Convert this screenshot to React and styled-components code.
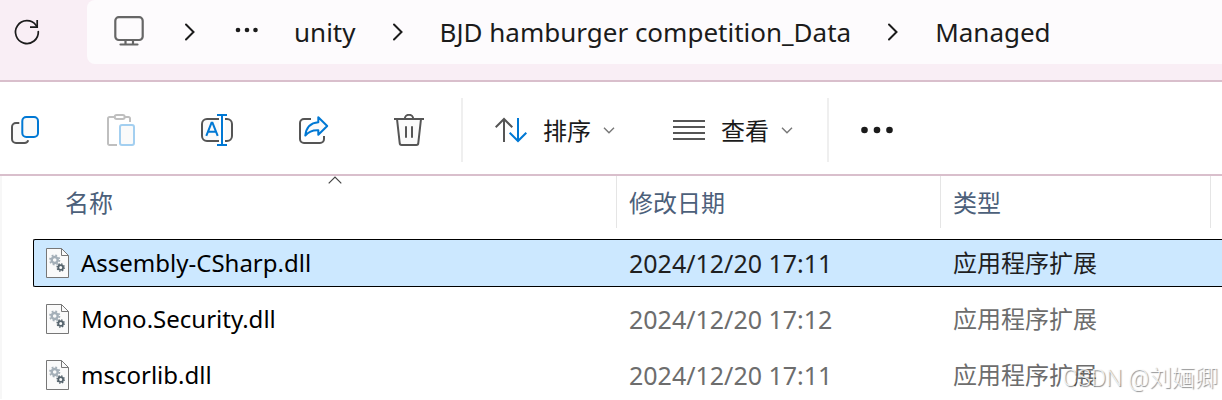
import styled, { createGlobalStyle } from "styled-components";

const files = [
  {
    name: "Assembly-CSharp.dll",
    modified: "2024/12/20 17:11",
    type: "应用程序扩展",
    selected: true,
  },
  {
    name: "Mono.Security.dll",
    modified: "2024/12/20 17:12",
    type: "应用程序扩展",
  },
  {
    name: "mscorlib.dll",
    modified: "2024/12/20 17:11",
    type: "应用程序扩展",
  },
];

const crumbs = ["unity", "BJD hamburger competition_Data", "Managed"];

function App() {
  return (
    <Container>
      <GlobalStyle />
      <AddressBar>
        <RefreshButton aria-label="刷新">
          <RefreshIcon />
        </RefreshButton>
        <Breadcrumbs aria-label="路径">
          <CrumbButton aria-label="此电脑">
            <MonitorIcon />
          </CrumbButton>
          <ChevronRight />
          <CrumbButton aria-label="更多路径">
            <Svg width="26" height="12" viewBox="0 0 26 12">
              <g fill="#1b1b1b">
                <circle cx="6" cy="4" r="2.3" />
                <circle cx="15" cy="4" r="2.3" />
                <circle cx="23.5" cy="4" r="2.3" />
              </g>
            </Svg>
          </CrumbButton>
          {crumbs.map((crumb, index) => (
            <Crumb key={crumb}>
              {index > 0 && <ChevronRight />}
              <CrumbButton>{crumb}</CrumbButton>
            </Crumb>
          ))}
        </Breadcrumbs>
      </AddressBar>

      <Toolbar>
        <IconGroup>
          <ToolButton aria-label="复制">
            <CopyIcon />
          </ToolButton>
          <ToolButton aria-label="粘贴" disabled>
            <PasteIcon />
          </ToolButton>
          <ToolButton aria-label="重命名">
            <RenameIcon />
          </ToolButton>
          <ToolButton aria-label="共享">
            <ShareIcon />
          </ToolButton>
          <ToolButton aria-label="删除">
            <TrashIcon />
          </ToolButton>
        </IconGroup>
        <MenuGroup>
          <ToolButton>
            <SortIcon />
            排序
            <ChevronDown />
          </ToolButton>
          <ToolButton>
            <ViewIcon />
            查看
            <ChevronDown />
          </ToolButton>
        </MenuGroup>
        <ToolButton aria-label="更多">
          <Svg width="32" height="32" viewBox="0 0 32 32">
            <g fill="#1b1b1b">
              <circle cx="3.5" cy="16" r="3.3" />
              <circle cx="16" cy="16" r="3.3" />
              <circle cx="28.5" cy="16" r="3.3" />
            </g>
          </Svg>
        </ToolButton>
      </Toolbar>

      <FilePane>
        <FileTable>
          <thead>
            <HeadRow>
              <HeadCell $first>
                名称
                <SortMark width="14" height="8" viewBox="0 0 14 8">
                  <path d="M.7 7.3 7 1l6.3 6.3" stroke="#444" strokeWidth="1.2" />
                </SortMark>
              </HeadCell>
              <HeadCell>修改日期</HeadCell>
              <HeadCell>类型</HeadCell>
              <HeadCell aria-label="大小" />
            </HeadRow>
          </thead>
          <FileRows>
            {files.map((file) => (
              <FileRow key={file.name} $selected={file.selected}>
                <NameCell>
                  <DllIcon />
                  {file.name}
                </NameCell>
                <DateCell $selected={file.selected}>{file.modified}</DateCell>
                <Cell $selected={file.selected}>{file.type}</Cell>
              </FileRow>
            ))}
          </FileRows>
        </FileTable>
      </FilePane>
      <Watermark>CSDN @刘婳卿</Watermark>
    </Container>
  );
}

export default App;

const GlobalStyle = createGlobalStyle`
  * {
    box-sizing: border-box;
  }

  body {
    margin: 0;
    background-color: #fff;
    font-family: "Noto Sans", "Noto Sans CJK SC", sans-serif;
  }

  button {
    padding: 0;
    border: none;
    background: none;
    font: inherit;
    color: inherit;
    cursor: pointer;
  }
`;

const Container = styled.div`
  position: relative;
  overflow: hidden;
`;

const AddressBar = styled.header`
  display: flex;
  align-items: flex-start;
  background-color: #f9eef5;
  border-bottom: 2px solid #d9bfcc;
  padding-bottom: 16px;
`;

const RefreshButton = styled.button`
  display: flex;
  align-items: center;
  justify-content: center;
  width: 54px;
  height: 64px;
  margin-right: 33px;
`;

const Breadcrumbs = styled.nav`
  display: flex;
  flex: 1;
  align-items: center;
  gap: 36px;
  height: 64px;
  padding-left: 25px;
  border-radius: 8px 0 0 8px;
  background-color: #fdfbfd;
  color: #1b1b1b;
  font-size: 26px;
  white-space: nowrap;
`;

const Crumb = styled.div`
  display: flex;
  align-items: center;
  gap: 36px;
`;

const CrumbButton = styled.button`
  display: flex;
  align-items: center;
`;

const Toolbar = styled.div`
  display: flex;
  align-items: center;
  padding: 16px 9px 12px;
  border-bottom: 2px solid #d9bfcc;
`;

const IconGroup = styled.div`
  display: flex;
  align-items: center;
  gap: 64px;
  height: 64px;
  padding-right: 36px;
`;

const MenuGroup = styled.div`
  display: flex;
  align-items: center;
  gap: 58px;
  height: 64px;
  padding: 0 34px 0 32px;
  margin-right: 32px;
  border-left: 2px solid #efefef;
  border-right: 2px solid #efefef;
`;

const ToolButton = styled.button`
  display: flex;
  align-items: center;
  gap: 16px;
  color: #1b1b1b;
  font-family: "Noto Sans CJK SC", sans-serif;
  font-size: 24px;
  line-height: 32px;

  &:disabled {
    cursor: default;
  }

  > svg:last-child:not(:first-child) {
    margin-left: -4px;
  }
`;

const FilePane = styled.main`
  border-left: 2px solid #f7f7f7;
  padding-left: 31px;
`;

const FileTable = styled.table`
  display: block;
  border-spacing: 0;
  font-size: 24px;
  line-height: 32px;
`;

const HeadRow = styled.tr`
  display: grid;
  grid-template-columns: 583px 324px 270px 1fr;
  height: 52px;
`;

const HeadCell = styled.th`
  position: relative;
  margin-left: ${(props) => (props.$first ? "20px" : "0")};
  padding: 10px 12px;
  border-left: ${(props) => (props.$first ? "none" : "1px solid #e5e5e5")};
  color: #4c607a;
  font-family: "Noto Sans CJK SC", sans-serif;
  font-weight: 400;
  text-align: left;
`;

const FileRows = styled.tbody`
  display: grid;
  gap: 8px;
  padding-top: 11px;
`;

const FileRow = styled.tr`
  display: grid;
  grid-template-columns: 582px 324px 1fr;
  align-items: center;
  height: 48px;
  border: 1px solid ${(props) => (props.$selected ? "#000" : "transparent")};
  border-right: none;
  border-radius: 2px 0 0 2px;
  background-color: ${(props) => (props.$selected ? "#cce8ff" : "transparent")};
`;

const NameCell = styled.td`
  display: flex;
  align-items: center;
  gap: 11px;
  padding: 0 12px;
  color: #000;
`;

const Cell = styled.td`
  padding: 0 13px;
  color: ${(props) => (props.$selected ? "#1f1f1f" : "#6d6d6d")};
`;

const DateCell = styled(Cell)`
  font-size: 25px;
`;

const Watermark = styled.div`
  position: absolute;
  right: 4px;
  bottom: 4px;
  color: rgba(255, 255, 255, 0.8);
  font-family: Roboto, "Noto Sans CJK SC", sans-serif;
  font-size: 23px;
  font-weight: 300;
  line-height: 32px;
  text-shadow: 1px 1px 1px rgba(0, 0, 0, 0.45);
  pointer-events: none;
`;

const Svg = styled.svg.attrs({ fill: "none", "aria-hidden": true })`
  display: block;
  flex-shrink: 0;
`;

const SortMark = styled(Svg)`
  position: absolute;
  top: 0;
  left: 50%;
  transform: translateX(-50%);
`;

const gray = "#555";
const blue = "#0078d4";

function RefreshIcon() {
  return (
    <Svg width="28" height="28" viewBox="0 0 28 28" stroke="#1b1b1b" strokeWidth="1.7">
      <path d="M25.3 13.5A11.4 11.4 0 1 1 23 7.2L24.2 9" strokeLinecap="round" />
      <path d="M24.2 2v7.2H17" />
    </Svg>
  );
}

function MonitorIcon() {
  return (
    <Svg width="36" height="32" viewBox="0 0 36 32" stroke="#666" strokeWidth="2.2">
      <rect x="3.3" y="1.2" width="27.4" height="22.8" rx="3.5" />
      <path d="M13.5 24v4.5M21 24v4.5M8.5 28.5h17" strokeLinecap="round" />
    </Svg>
  );
}

function ChevronRight() {
  return (
    <Svg width="12" height="18" viewBox="0 0 12 18" stroke="#1b1b1b" strokeWidth="2">
      <path d="M2 1.5 9.5 9 2 16.5" strokeLinecap="round" />
    </Svg>
  );
}

function ChevronDown() {
  return (
    <Svg width="12" height="12" viewBox="0 0 12 12" stroke="#777" strokeWidth="1.4">
      <path d="m1 3.7 5 5 5-5" />
    </Svg>
  );
}

function CopyIcon() {
  return (
    <Svg width="32" height="32" viewBox="0 0 32 32" strokeWidth="2">
      <path
        d="M10.3 9H7a4 4 0 0 0-4 4v12a4 4 0 0 0 4 4h8.5c2 0 3.3-1.2 3.7-2.7"
        stroke={gray}
        fill="#fafafa"
      />
      <rect x="13.3" y="3" width="15.7" height="20" rx="4" stroke={blue} fill="#fafafa" />
    </Svg>
  );
}

function PasteIcon() {
  return (
    <Svg width="32" height="32" viewBox="0 0 32 32" strokeWidth="2">
      <path
        d="M9.5 3h-5A1.5 1.5 0 0 0 3 4.500v25A1.5 1.5 0 0 0 4.500 31H12M19.500 3h4A1.500 1.500 0 0 1 25 4.500V8"
        stroke="#bfbfbf"
      />
      <rect x="9.7" y="1" width="10" height="4" rx="2" stroke="#bfbfbf" />
      <rect x="15" y="11" width="14" height="20" rx="2" stroke="#a3cff0" fill="#fafafa" />
    </Svg>
  );
}

function RenameIcon() {
  return (
    <Svg width="32" height="32" viewBox="0 0 32 32" strokeWidth="2">
      <path d="M18 5H6a5 5 0 0 0-5 5v12a5 5 0 0 0 5 5h12" stroke={gray} fill="#fafafa" />
      <path d="M24 5h2a5 5 0 0 1 5 5v12a5 5 0 0 1-5 5h-2" stroke={gray} fill="#fafafa" />
      <path d="M21 1v30M16 1h10M16 31h10" stroke={blue} />
      <path d="m5.3 21.8 5.2-13h1l5.2 13M7 17.7h8" stroke={blue} />
    </Svg>
  );
}

function ShareIcon() {
  return (
    <Svg width="32" height="32" viewBox="0 0 32 32" strokeWidth="2">
      <path
        d="M14 5H7a4 4 0 0 0-4 4v16a4 4 0 0 0 4 4h16a4 4 0 0 0 4-4v-3"
        stroke={gray}
      />
      <path
        d="M21.3 3.3 30.2 12l-8.9 8.8v-4.6c-5.5-.3-9.6 1.3-13 5.3.8-7.5 5.3-12.7 13-13.3z"
        stroke={blue}
        fill="#fafafa"
        strokeLinejoin="round"
      />
    </Svg>
  );
}

function TrashIcon() {
  return (
    <Svg width="32" height="32" viewBox="0 0 32 32" stroke={gray} strokeWidth="2">
      <path d="m4 5 2.7 24a2 2 0 0 0 2 2h14.6a2 2 0 0 0 2-2L28 5" fill="#fafafa" />
      <path d="M1 5h30M11.8 5a4.2 4.2 0 0 1 8.4 0M13 12.3v11.5M19 12.3v11.5" />
    </Svg>
  );
}

function SortIcon() {
  return (
    <Svg width="32" height="32" viewBox="0 0 32 32" strokeWidth="2">
      <path d="M9 28V5.3M.7 13.3 9 5l8.3 8.3" stroke={gray} />
      <path d="M23 4v22.7M14.7 18.7 23 27l8.3-8.3" stroke={blue} />
    </Svg>
  );
}

function ViewIcon() {
  return (
    <Svg width="32" height="32" viewBox="0 0 32 32" stroke={gray} strokeWidth="2">
      <path d="M0 7h32M0 13h32M0 19h32M0 25h32" />
    </Svg>
  );
}

function DllIcon() {
  return (
    <Svg width="24" height="30" viewBox="0 0 24 30">
      <path d="M.5.5h15l7 7v22H.5z" fill="#fafafa" stroke="#777" />
      <path d="M15.5.5v7h7" stroke="#777" />
      <circle cx="8.7" cy="12" r="3" stroke="#a4afb8" strokeWidth="2.4" />
      <circle cx="8.7" cy="12" r="4.7" stroke="#a4afb8" strokeWidth="1.8" strokeDasharray="1.85 1.84" />
      <circle cx="14.7" cy="19.5" r="2.4" stroke="#56646d" strokeWidth="1.8" />
      <circle cx="14.7" cy="19.5" r="3.6" stroke="#56646d" strokeWidth="1.4" strokeDasharray="1.41 1.417" />
    </Svg>
  );
}
